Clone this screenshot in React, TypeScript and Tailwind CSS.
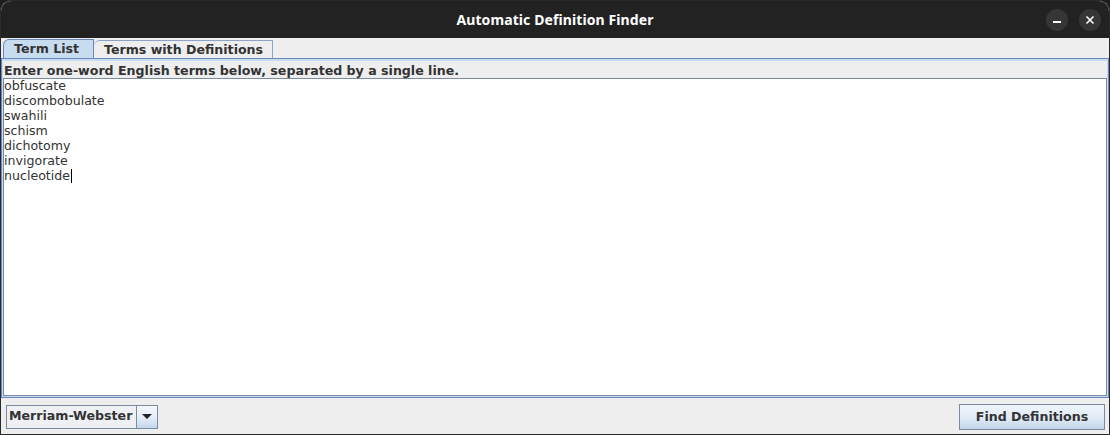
import React from "react";

const terms = [
  "obfuscate",
  "discombobulate",
  "swahili",
  "schism",
  "dichotomy",
  "invigorate",
  "nucleotide",
];

export default function App() {
  const dv = { fontFamily: '"DejaVu Sans", Verdana, sans-serif' };
  return (
    <div className="w-[1110px] h-[435px] bg-[#1e1e1e]">
      <div className="w-[1110px] h-[435px] rounded-t-[11px] overflow-hidden bg-[#eeeeee] border border-[#2a2a2a] flex flex-col">
        {/* title bar */}
        <div className="h-[37px] shrink-0 bg-[#222222] flex items-center relative">
          <div
            className="flex-1 text-center text-white font-bold text-[14px] tracking-[0.1px] -mt-[1px]"
            style={{ fontFamily: '"Noto Sans", "Open Sans", sans-serif' }}
          >
            Automatic Definition Finder
          </div>
          <div className="absolute right-[8px] top-[8px] flex gap-[11px]">
            <div className="w-[22px] h-[22px] rounded-full bg-[#363636] flex items-center justify-center">
              <div className="w-[8px] h-[1.5px] bg-white mt-[4px]" />
            </div>
            <div className="w-[22px] h-[22px] rounded-full bg-[#363636] flex items-center justify-center">
              <svg width="10" height="10" viewBox="0 0 10 10">
                <path d="M1.5 1.5 L8.5 8.5 M8.5 1.5 L1.5 8.5" stroke="white" strokeWidth="1.6" />
              </svg>
            </div>
          </div>
        </div>

        {/* tabs */}
        <div className="h-[20px] shrink-0 flex items-end pl-[2px] pt-[2px]" style={dv}>
          <div className="h-[19px] w-[91px] bg-[#c8dcf0] border border-b-0 border-[#6b87bd] rounded-tl-[6px] flex items-center pl-[10px] pt-[1px] text-[12.6px] font-bold text-[#333333]">
            Term List
          </div>
          <div className="h-[18px] w-[179px] bg-[#eeeeee] border border-b-0 border-l-0 border-[#8ea2c6] rounded-tl-[6px] flex items-center pl-[10px] pt-[1px] text-[12.6px] font-bold text-[#333333]">
            Terms with Definitions
          </div>
        </div>

        {/* content panel */}
        <div className="flex-1 min-h-0 border border-[#6b87bd] flex flex-col" style={dv}>
          <div className="flex-1 min-h-0 border-t-2 border-x border-b border-[#c8dcf0] flex flex-col">
            <div className="h-[17px] shrink-0 text-[12.6px] font-bold text-[#333333] leading-[17px] pl-[1px] pt-[1px]">
              Enter one-word English terms below, separated by a single line.
            </div>
            <div className="flex-1 min-h-0 bg-white border border-[#7a8a9f]">
              <div className="-mt-[1px]">
                {terms.map((t, i) => (
                  <div key={t} className="text-[12.6px] leading-[15px] text-[#333333] h-[15px] flex items-center">
                    <span>{t}</span>
                    {i === terms.length - 1 && <span className="inline-block w-[1px] h-[14px] bg-black ml-[1px]" />}
                  </div>
                ))}
              </div>
            </div>
          </div>
        </div>

        {/* bottom bar */}
        <div className="h-[36px] shrink-0 flex items-center justify-between pl-[5px] pr-[4px]" style={dv}>
          <div className="flex h-[24px] mt-[1px]">
            <div className="w-[131px] h-[24px] bg-[#eef0f4] border border-[#7a8a9f] flex items-center pl-[2px] text-[12.6px] font-bold text-[#333333]">
              Merriam-Webster
            </div>
            <div className="w-[21px] h-[24px] border border-l-0 border-[#7a8a9f] bg-gradient-to-b from-[#f4f8fc] via-[#e6eef7] to-[#c4d7ec] flex items-center justify-center">
              <svg width="10" height="6" viewBox="0 0 10 6">
                <path d="M0 0 L10 0 L5 5 Z" fill="#222222" />
              </svg>
            </div>
          </div>
          <div className="w-[146px] h-[26px] border border-[#7a8a9f] bg-gradient-to-b from-[#eef4fa] via-[#e2ecf6] to-[#c2d6eb] flex items-center justify-center text-[12.6px] font-bold text-[#333333] mt-[2px]">
            Find Definitions
          </div>
        </div>
      </div>
    </div>
  );
}
